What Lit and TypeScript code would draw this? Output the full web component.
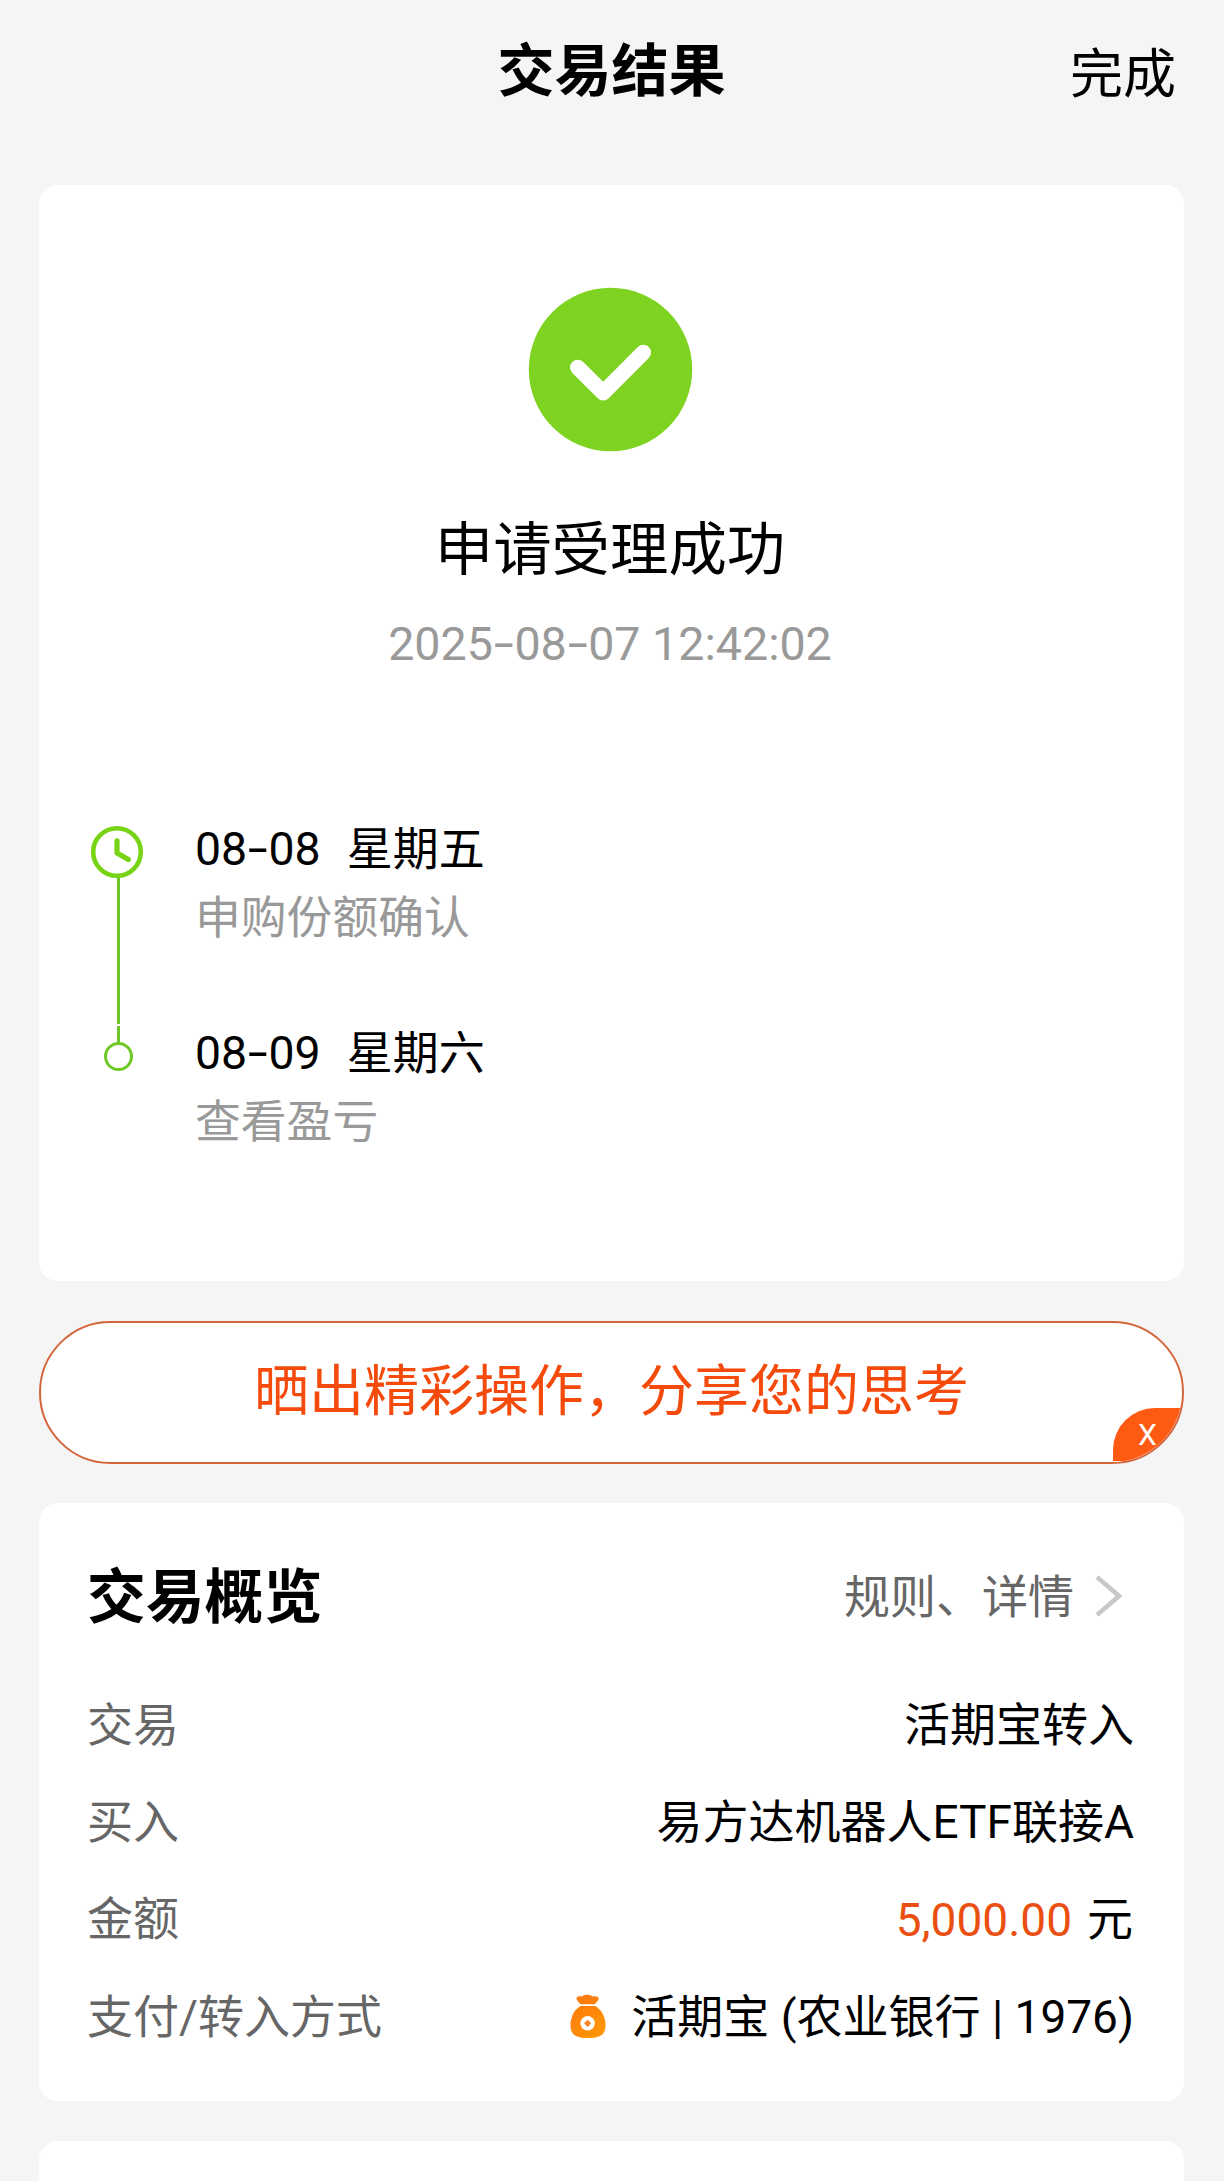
import { LitElement, html, css, svg } from "lit";
import { customElement, property } from "lit/decorators.js";

const textBase = css`
  * {
    box-sizing: border-box;
  }
  .dash {
    display: inline-block;
    font-family: Inter, sans-serif;
    transform: scale(1.15, 0.95);
  }
`;

/** Splits a date string so its hyphens can be set in a wider face. */
const dated = (value: string) =>
  value.split("-").map((part, i) => (i ? html`<span class="dash">-</span>${part}` : part));

@customElement("result-step")
export class ResultStep extends LitElement {
  @property() date = "";
  @property() day = "";
  @property() note = "";
  @property({ type: Boolean }) last = false;

  static styles = [
    textBase,
    css`
      :host {
        display: flex;
        height: 204px;
      }
      .rail {
        width: 54px;
        margin-right: 51px;
        display: flex;
        flex-direction: column;
        align-items: center;
      }
      .clock {
        width: 54px;
        height: 54px;
        margin-top: 5px;
        flex: none;
      }
      .line {
        width: 3px;
        flex: 1;
        background: #6fc42b;
        margin-left: 3px;
        margin-top: -1px;
      }
      .stub {
        width: 3px;
        height: 17px;
        margin: 2px 0 -1px 3px;
        background: #6fc42b;
      }
      .node {
        width: 29px;
        height: 29px;
        margin-left: 3px;
        border: 3.5px solid #70c827;
        border-radius: 50%;
      }
      .date {
        display: flex;
        height: 59px;
        line-height: 57px;
        font-size: 46.4px;
        color: #000;
        gap: 26px;
        white-space: nowrap;
      }
      .day {
        font-size: 46px;
        line-height: 59px;
      }
      .note {
        height: 78px;
        line-height: 79px;
        font-size: 45.8px;
        color: #999;
      }
    `,
  ];

  render() {
    return html`
      <div class="rail">
        ${this.last
          ? html`<div class="stub"></div><div class="node"></div>`
          : html`<svg class="clock" viewBox="0 0 54 54" fill="none" stroke="#76d414">
                <circle cx="27" cy="27" r="23.8" stroke-width="4.6" />
                <path d="M27 15.8V28L38.3 34.6" stroke-width="5.2" stroke-linecap="round" stroke-linejoin="round" />
              </svg>
              <div class="line"></div>`}
      </div>
      <div>
        <div class="date"><span>${dated(this.date)}</span><span class="day">${this.day}</span></div>
        <div class="note">${this.note}</div>
      </div>
    `;
  }
}

const moneyBag = svg`
  <defs>
    <linearGradient id="bag" x1="0" y1="0" x2="1" y2="1">
      <stop offset="0" stop-color="#ff7a08" />
      <stop offset="1" stop-color="#ff9a08" />
    </linearGradient>
  </defs>
  <path fill="#fd7d0e" d="M10.4 10.2C8.6 7.6 6.3 6 6.4 4.2C6.6 2.3 9.6 1.8 12 2.4C13.6 .2 20.6 .2 22.4 2.4C25 1.8 28.6 2.4 28.8 4.4C28.8 6.2 26.4 7.8 24.8 10.2Z" />
  <path fill="url(#bag)" d="M10.6 12H25.2C30.5 15 35.4 21.5 35.5 31C35.5 40.500 31 44 18 44C5 44 .5 40.500 .5 31C.6 21.500 5.300 15 10.6 12Z" />
  <circle cx="17.600" cy="29.300" r="7.200" fill="#fff" />
  <path fill="#fb8420" d="M17.600 25.700L21.200 29.300L17.600 32.900L14 29.300Z" />
`;

@customElement("app-root")
export class AppRoot extends LitElement {
  static styles = [
    textBase,
    css`
      :host {
        display: block;
        height: 2181px;
        overflow: hidden;
        background: #f5f5f5;
        color: #000;
        font-family: Roboto, "Noto Sans CJK SC", sans-serif;
      }
      .page {
        display: flex;
        flex-direction: column;
        padding: 0 40px 0 39px;
      }
      .bar {
        height: 185px;
        padding: 37px 8px 0 0;
        display: grid;
        grid-template-columns: 1fr auto 1fr;
        line-height: 70px;
      }
      .title {
        grid-column: 2;
        margin: 0;
        font-size: 57px;
        font-weight: 700;
        padding-left: 8px;
      }
      .done {
        justify-self: end;
        font-size: 53px;
        padding-top: 3px;
      }
      .card {
        background: #fff;
        border-radius: 19px;
      }
      .result {
        height: 1096px;
        padding-top: 102px;
        display: flex;
        flex-direction: column;
      }
      .tick {
        width: 165px;
        height: 165px;
        align-self: center;
        margin-right: 3px;
      }
      .status {
        margin-top: 63px;
        height: 70px;
        line-height: 70px;
        font-size: 58.4px;
        text-align: center;
        padding-right: 3px;
      }
      .time {
        margin-top: 33px;
        height: 50px;
        line-height: 50px;
        font-size: 46.6px;
        text-align: center;
        color: #999;
        padding-right: 3px;
      }
      .steps {
        margin: 152px 0 0 51px;
      }
      .share {
        position: relative;
        height: 143px;
        margin: 40px 0 39px;
        overflow: hidden;
        border: 2px solid #d5663c;
        border-radius: 72px;
        background: #fff;
        color: #f44a0c;
        font-size: 55px;
        line-height: 136px;
        text-align: center;
      }
      .close {
        position: absolute;
        right: 0;
        bottom: 1px;
        width: 69px;
        height: 53px;
        border-top-left-radius: 42px;
        background: #fe5a12;
        color: #fff;
        font-size: 30px;
        line-height: 53px;
      }
      .overview {
        height: 598px;
        padding: 14px 50px 0 48px;
        font-size: 46px;
        line-height: 60px;
      }
      .head,
      .row {
        display: flex;
        align-items: center;
        justify-content: space-between;
        white-space: nowrap;
      }
      .head {
        height: 159px;
      }
      .heading {
        margin: 0;
        padding-top: 2px;
        font-size: 58.8px;
        font-weight: 700;
      }
      .more {
        display: flex;
        align-items: center;
        color: #666;
        padding-right: 12px;
        gap: 18px;
      }
      .chevron {
        width: 30px;
        height: 46px;
        margin-bottom: 2px;
      }
      .row {
        height: 97.4px;
      }
      .label {
        color: #666;
      }
      .value {
        display: flex;
        align-items: center;
      }
      .amount {
        color: #e94f10;
        margin-right: 15px;
        padding-top: 1px;
      }
      .yuan {
        padding-right: 1px;
      }
      .bag {
        width: 36px;
        height: 45px;
        margin-right: 25px;
        margin-bottom: 1px;
      }
      .next {
        margin-top: 40px;
        height: 80px;
      }
    `,
  ];

  render() {
    return html`
      <div class="page">
        <header class="bar">
          <h1 class="title">交易结果</h1>
          <span class="done">完成</span>
        </header>

        <section class="card result">
          <svg class="tick" viewBox="0 0 165 165">
            <circle cx="82.5" cy="82.5" r="81.7" fill="#7ed321" />
            <path d="M49.800 80.500L75.200 105.800L115.300 65.500" fill="none" stroke="#fff" stroke-width="15.500" stroke-linecap="round" stroke-linejoin="round" />
          </svg>
          <div class="status">申请受理成功</div>
          <div class="time">${dated("2025-08-07 12:42:02")}</div>
          <div class="steps">
            <result-step date="08-08" day="星期五" note="申购份额确认"></result-step>
            <result-step date="08-09" day="星期六" note="查看盈亏" last></result-step>
          </div>
        </section>

        <div class="share">
          晒出精彩操作，分享您的思考
          <span class="close">X</span>
        </div>

        <section class="card overview">
          <div class="head">
            <h2 class="heading">交易概览</h2>
            <div class="more">
              <span>规则、详情</span>
              <svg class="chevron" viewBox="0 0 30 46" fill="none" stroke="#c8c8c8" stroke-width="4.500">
                <path d="M5 4L27 23L5 42" />
              </svg>
            </div>
          </div>
          <div class="row"><span class="label">交易</span><span class="value">活期宝转入</span></div>
          <div class="row"><span class="label">买入</span><span class="value">易方达机器人ETF联接A</span></div>
          <div class="row">
            <span class="label">金额</span>
            <span class="value"><span class="amount">5,000.00</span><span class="yuan">元</span></span>
          </div>
          <div class="row">
            <span class="label">支付/转入方式</span>
            <span class="value">
              <svg class="bag" viewBox="0 0 36 45">${moneyBag}</svg>
              <span>活期宝 (农业银行 | 1976)</span>
            </span>
          </div>
        </section>

        <section class="card next"></section>
      </div>
    `;
  }
}
